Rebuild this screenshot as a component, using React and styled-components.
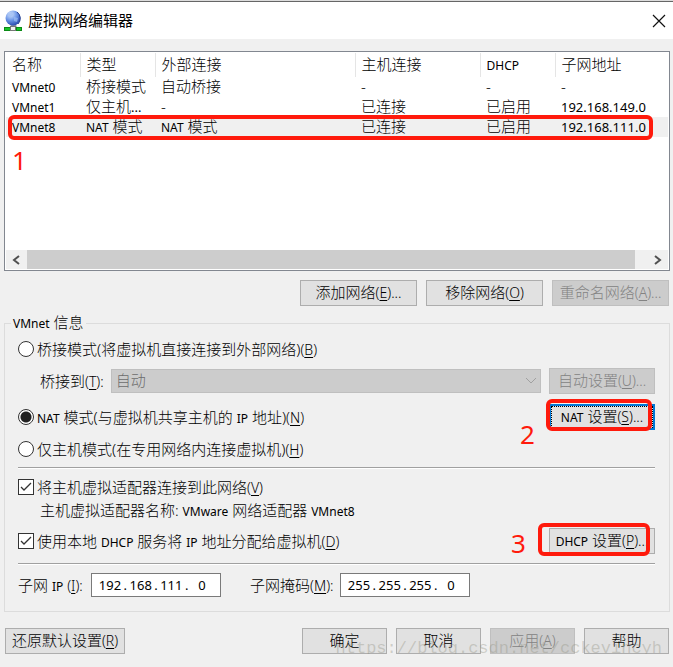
import { Fragment } from 'react';
import styled, { createGlobalStyle, css } from 'styled-components';

const columns = [
    { title: '名称', width: 74 },
    { title: '类型', width: 75 },
    { title: '外部连接', width: 200 },
    { title: '主机连接', width: 125 },
    { title: 'DHCP', width: 75 },
    { title: '子网地址' },
];

const networks = [
    ['VMnet0', '桥接模式', '自动桥接', '-', '-', '-'],
    ['VMnet1', '仅主机...', '-', '已连接', '已启用', '192.168.149.0'],
    ['VMnet8', 'NAT 模式', 'NAT 模式', '已连接', '已启用', '192.168.111.0'],
];

const latinSize = (part) => {
    if (/^[\d.]+$/.test(part)) return 13;
    return /^\w/.test(part) ? 12 : 15;
};

// Latin words are set smaller than the Chinese text around them
const Text = ({ children, hotkey, after = '' }) => (
    <span>
        {children.split(/([\w.]+|[ ():-]+)/).map((part, i) => (
            i % 2 ? <Latin key={i} $size={latinSize(part)}>{part}</Latin> : part
        ))}
        {hotkey && <Latin $size={14}>(<u>{hotkey}</u>){after}</Latin>}
    </span>
);

const IpField = ({ id, name, value }) => (
    <IpBox role="group" aria-label={name}>
        {value.split('.').map((octet, i) => (
            <Fragment key={i}>
                {i > 0 && <Dot>.</Dot>}
                <Octet id={i === 0 ? id : undefined} aria-label={`${name} ${i + 1}`} defaultValue={octet} maxLength={3} />
            </Fragment>
        ))}
    </IpBox>
);

const GlobeIcon = () => (
    <svg width="20" height="22" viewBox="0 0 20 22" aria-hidden="true">
        <defs>
            <radialGradient id="globe" cx="0.35" cy="0.25" r="0.8">
                <stop offset="0" stopColor="#d5e5fd" />
                <stop offset="0.5" stopColor="#6f98e8" />
                <stop offset="1" stopColor="#2546ad" />
            </radialGradient>
        </defs>
        <path d="M7 14h5l1 4H6z" fill="#8a93a8" />
        <circle cx="9" cy="8" r="7.5" fill="url(#globe)" />
        <path d="M4 4l4-2 1 3-3 2zM10 7l4 1-1 4-3-1z" fill="#9dbcf4" opacity="0.7" />
        <path d="M13 2a8 8 0 0 1 1 12" fill="none" stroke="#27418f" strokeWidth="1" />
        <path d="M0 17h18v4H0z" fill="#0b8a16" />
        <path d="M1 18h5v2H1zM13 18h4v2h-4z" fill="#19c52a" />
        <path d="M6 16h6v5H6z" fill="#777" />
        <path d="M7 17h4v3H7z" fill="#f1f1f1" />
    </svg>
);

const App = () => (
    <>
        <GlobalStyle />
        <Dialog>
            <TitleBar>
                <GlobeIcon />
                <Title>虚拟网络编辑器</Title>
                <CloseButton type="button" aria-label="关闭">
                    <svg width="14" height="14" viewBox="0 0 14 14">
                        <path d="M1 1l12 12M13 1L1 13" stroke="#111" strokeWidth="1.2" fill="none" />
                    </svg>
                </CloseButton>
            </TitleBar>

            <Content>
                <ListBox>
                    <Table>
                        <colgroup>
                            {columns.map((c) => <col key={c.title} width={c.width} />)}
                        </colgroup>
                        <thead>
                            <tr>
                                {columns.map((c) => <HeadCell key={c.title}><Text>{c.title}</Text></HeadCell>)}
                            </tr>
                        </thead>
                        <tbody>
                            {networks.map((row, r) => (
                                <BodyRow key={row[0]} $selected={r === 2}>
                                    {row.map((cell, i) => (
                                        <Cell key={i}>
                                            <Text>{cell}</Text>
                                            {r === 2 && i === 5 && (
                                                <>
                                                    <Callout $inset="-2px 15px -3px 2px" />
                                                    <Marker $left={6} $top={29}>1</Marker>
                                                </>
                                            )}
                                        </Cell>
                                    ))}
                                </BodyRow>
                            ))}
                        </tbody>
                    </Table>
                    <ScrollBar>
                        <ScrollButton type="button" aria-label="向左滚动">
                            <svg width="8" height="10" viewBox="0 0 8 10">
                                <path d="M7 1L2 5l5 4" stroke="#505050" strokeWidth="2" fill="none" />
                            </svg>
                        </ScrollButton>
                        <Thumb />
                        <ScrollButton type="button" aria-label="向右滚动" $right>
                            <svg width="8" height="10" viewBox="0 0 8 10">
                                <path d="M1 1l5 4-5 4" stroke="#505050" strokeWidth="2" fill="none" />
                            </svg>
                        </ScrollButton>
                    </ScrollBar>
                </ListBox>

                <Actions>
                    <Button type="button" $width={117}><Text hotkey="E" after="...">添加网络</Text></Button>
                    <Button type="button" $width={117}><Text hotkey="O">移除网络</Text></Button>
                    <Button type="button" $width={117} disabled><Text hotkey="A" after="...">重命名网络</Text></Button>
                </Actions>

                <Group>
                    <Legend><Text>VMnet 信息</Text></Legend>
                    <Row $top={3}>
                        <Option>
                            <Radio name="mode" />
                            <Text hotkey="B">桥接模式(将虚拟机直接连接到外部网络)</Text>
                        </Option>
                    </Row>
                    <Row $top={6}>
                        <Indent as="label" htmlFor="bridge"><Text hotkey="T" after=":">桥接到</Text></Indent>
                        <SelectWrap>
                            <Select id="bridge" disabled>
                                <option>自动</option>
                            </Select>
                            <Chevron width="12" height="8" viewBox="0 0 12 8">
                                <path d="M1 1l5 5 5-5" stroke="#a0a0a0" fill="none" />
                            </Chevron>
                        </SelectWrap>
                        <Button type="button" $width={106} disabled><Text hotkey="U" after="...">自动设置</Text></Button>
                    </Row>
                    <Row $top={10}>
                        <Option>
                            <Radio name="mode" defaultChecked />
                            <Text hotkey="N">NAT 模式(与虚拟机共享主机的 IP 地址)</Text>
                        </Option>
                        <Anchor>
                            <Button type="button" $width={106} $focused><Text hotkey="S" after="...">NAT 设置</Text></Button>
                            <Callout $inset="-5px 3px -1px -3px" />
                            <Marker $left={-29} $top={16}>2</Marker>
                        </Anchor>
                    </Row>
                    <Row $top={6}>
                        <Option>
                            <Radio name="mode" />
                            <Text hotkey="H">仅主机模式(在专用网络内连接虚拟机)</Text>
                        </Option>
                    </Row>
                    <Divider $top={5} />
                    <Row $top={5}>
                        <Option>
                            <Checkbox />
                            <Text hotkey="V">将主机虚拟适配器连接到此网络</Text>
                        </Option>
                    </Row>
                    <Indent><Text>主机虚拟适配器名称: VMware 网络适配器 VMnet8</Text></Indent>
                    <Row $top={8}>
                        <Option>
                            <Checkbox />
                            <Text hotkey="D">使用本地 DHCP 服务将 IP 地址分配给虚拟机</Text>
                        </Option>
                        <Anchor>
                            <Button type="button" $width={106}><Text hotkey="P" after="...">DHCP 设置</Text></Button>
                            <Callout $inset="-5px 5px -2px -11px" />
                            <Marker $left={-38} $top={1}>3</Marker>
                        </Anchor>
                    </Row>
                    <Divider $top={9} />
                    <Row $top={7}>
                        <FieldLabel htmlFor="subnet" $width={73}><Text hotkey="I" after=":">子网 IP </Text></FieldLabel>
                        <IpField id="subnet" name="子网 IP" value="192.168.111.0" />
                        <FieldLabel htmlFor="mask" $width={90} $gap><Text hotkey="M" after=":">子网掩码</Text></FieldLabel>
                        <IpField id="mask" name="子网掩码" value="255.255.255.0" />
                    </Row>
                </Group>

                <Footer>
                    <Button type="button" $width={120}><Text hotkey="R">还原默认设置</Text></Button>
                    <Spacer />
                    <Button type="button" $width={85}>确定</Button>
                    <Button type="button" $width={85}>取消</Button>
                    <Button type="button" $width={85} disabled><Text hotkey="A">应用</Text></Button>
                    <Button type="button" $width={85}>帮助</Button>
                    <Watermark>https://blog.csdn.net/cckevincyh</Watermark>
                </Footer>
            </Content>
        </Dialog>
    </>
);

const GlobalStyle = createGlobalStyle`
    * {
        box-sizing: border-box;
    }

    body {
        margin: 0;
        background: #f0f0f0;
        color: #000;
        font-family: "Noto Sans CJK SC", sans-serif;
        font-size: 15px;
        font-weight: 300;
        line-height: 18px;
    }

    button, input, select {
        font: inherit;
        color: inherit;
    }
`;

const Latin = styled.span`
    font-family: "Noto Sans", sans-serif;
    font-size: ${(p) => p.$size}px;
    font-weight: ${(p) => (p.$size > 13 ? 300 : 400)};
    line-height: 1;
    white-space: pre;

    u {
        text-underline-offset: 2px;
    }
`;

const Dialog = styled.main`
    border-top: 1px solid #dcdcdc;
`;

const TitleBar = styled.header`
    display: flex;
    align-items: center;
    height: 38px;
    padding: 0 7px 0 4px;
    background: #fff;
    border-top: 1px solid #666;
`;

const Title = styled.h1`
    flex: 1;
    margin: 0 0 2px 4px;
    font-size: 15px;
    font-weight: 400;
`;

const CloseButton = styled.button`
    display: flex;
    padding: 0;
    border: 0;
    background: none;
`;

const Content = styled.div`
    padding: 12px 3px 0 4px;
`;

const ListBox = styled.section`
    display: flex;
    flex-direction: column;
    min-height: 220px;
    padding: 1px;
    background: #fff;
    border: 1px solid #828790;
`;

const Table = styled.table`
    width: 100%;
    table-layout: fixed;
    border-collapse: collapse;
    text-align: left;
`;

const HeadCell = styled.th`
    height: 24px;
    padding: 0 0 2px 6px;
    font-weight: inherit;
    border-right: 1px solid #e5e5e5;

    &:last-child {
        border-right: 0;
    }
`;

const Cell = styled.td`
    height: 20px;
    padding: 0 0 2px 6px;
    white-space: nowrap;
`;

const BodyRow = styled.tr`
    position: relative;
    background: ${(p) => (p.$selected ? '#f0f0f0' : 'transparent')};
`;

const ScrollBar = styled.div`
    display: flex;
    height: 19px;
    margin-top: auto;
    background: #f0f0f0;
`;

const ScrollButton = styled.button`
    display: flex;
    align-items: center;
    justify-content: ${(p) => (p.$right ? 'flex-end' : 'center')};
    width: ${(p) => (p.$right ? 33 : 21)}px;
    padding: 0 ${(p) => (p.$right ? 6 : 2)}px 0 0;
    border: 0;
    background: none;
`;

const Thumb = styled.div`
    flex: 1;
    background: #cdcdcd;
`;

const Actions = styled.div`
    display: flex;
    justify-content: flex-end;
    gap: 9px;
    margin-top: 9px;
    padding-right: 1px;
`;

const Button = styled.button`
    flex: none;
    width: ${(p) => p.$width}px;
    height: 26px;
    padding: 0 0 2px;
    background: #e1e1e1;
    border: 1px solid #adadad;
    white-space: nowrap;

    &:disabled {
        color: #838383;
        background: #cccccc;
        border-color: #bfbfbf;
    }

    ${(p) => p.$focused && css`
        border: 2px solid #0078d7;
        outline: 1px dotted #000;
        outline-offset: -3px;
    `}
`;

const Group = styled.fieldset`
    min-width: 0;
    margin: 7px 0 0;
    padding: 0 14px 13px 13px;
    border: 1px solid #dcdcdc;
`;

const Legend = styled.legend`
    height: 20px;
    margin-left: -7px;
    padding: 0 2px;
`;

const Row = styled.div`
    display: flex;
    align-items: center;
    height: 26px;
    margin-top: ${(p) => p.$top}px;
`;

const Option = styled.label`
    display: flex;
    align-items: center;
    gap: 3px;
    flex: 1;
    white-space: nowrap;
`;

const Radio = styled.input.attrs({ type: 'radio' })`
    appearance: none;
    width: 16px;
    height: 16px;
    margin: 0;
    background: #fff;
    border: 1px solid #333;
    border-radius: 50%;

    &:checked {
        background: radial-gradient(circle, #222 5px, #fff 6px);
    }
`;

const checkMark = `url("data:image/svg+xml,%3Csvg xmlns='http://www.w3.org/2000/svg' viewBox='0 0 14 14'%3E%3Cpath d='M2 7l3 3 7-7' fill='none' stroke='%23333' stroke-width='1.3'/%3E%3C/svg%3E")`;

const Checkbox = styled.input.attrs({ type: 'checkbox', defaultChecked: true })`
    appearance: none;
    width: 16px;
    height: 16px;
    margin: 0;
    background: #fff;
    border: 1px solid #333;

    &:checked {
        background-image: ${checkMark};
    }
`;

const Indent = styled.div`
    padding-left: 22px;
    line-height: 20px;
    white-space: nowrap;
`;

const SelectWrap = styled.div`
    position: relative;
    flex: 1;
    height: 24px;
    margin: 0 8px 0 7px;
`;

const Select = styled.select`
    display: block;
    appearance: none;
    width: 100%;
    height: 24px;
    padding: 0 4px 2px;
    background: #cccccc;
    border: 1px solid #bfbfbf;
    border-radius: 0;

    &:disabled {
        color: #6d6d6d;
        opacity: 1;
    }
`;

const Chevron = styled.svg`
    position: absolute;
    top: 8px;
    right: 4px;
`;

const Divider = styled.hr`
    height: 2px;
    margin: ${(p) => p.$top}px 0 0;
    background: #fff;
    border: 0;
    border-top: 1px solid #a0a0a0;
`;

const FieldLabel = styled.label`
    flex: none;
    width: ${(p) => p.$width}px;
    margin-left: ${(p) => (p.$gap ? 29 : 0)}px;
    white-space: nowrap;
`;

const IpBox = styled.div`
    display: flex;
    align-items: center;
    width: 130px;
    height: 24px;
    padding: 0 5px;
    background: #fff;
    border: 1px solid #7a7a7a;
    font-family: "Noto Sans", sans-serif;
    font-size: 13px;
    font-weight: 400;
`;

const Octet = styled.input`
    width: 26px;
    height: 20px;
    padding: 0;
    border: 0;
    background: none;
    text-align: center;
    outline: 0;
`;

const Dot = styled.span`
    width: 5px;
    text-align: center;
`;

const Anchor = styled.div`
    position: relative;
    display: flex;
`;

/* Red annotations drawn over the dialog */
const Callout = styled.span`
    position: absolute;
    inset: ${(p) => p.$inset};
    border: 4px solid #ff1a0c;
    border-radius: 6px;
    pointer-events: none;
`;

const Marker = styled.span`
    position: absolute;
    left: ${(p) => p.$left}px;
    top: ${(p) => p.$top}px;
    color: #ff1a0c;
    font-family: "Noto Sans", sans-serif;
    font-size: 26px;
    font-weight: 400;
    line-height: 28px;
`;

const Footer = styled.footer`
    position: relative;
    display: flex;
    gap: 9px;
    margin-top: 16px;
    padding: 0 1px;
`;

const Spacer = styled.div`
    flex: 1;
`;

const Watermark = styled.span`
    position: absolute;
    right: 8px;
    top: 12px;
    color: rgba(140, 140, 125, 0.35);
    font-family: "Liberation Mono", monospace;
    font-size: 17px;
    font-weight: 400;
    pointer-events: none;
`;

export default App;
